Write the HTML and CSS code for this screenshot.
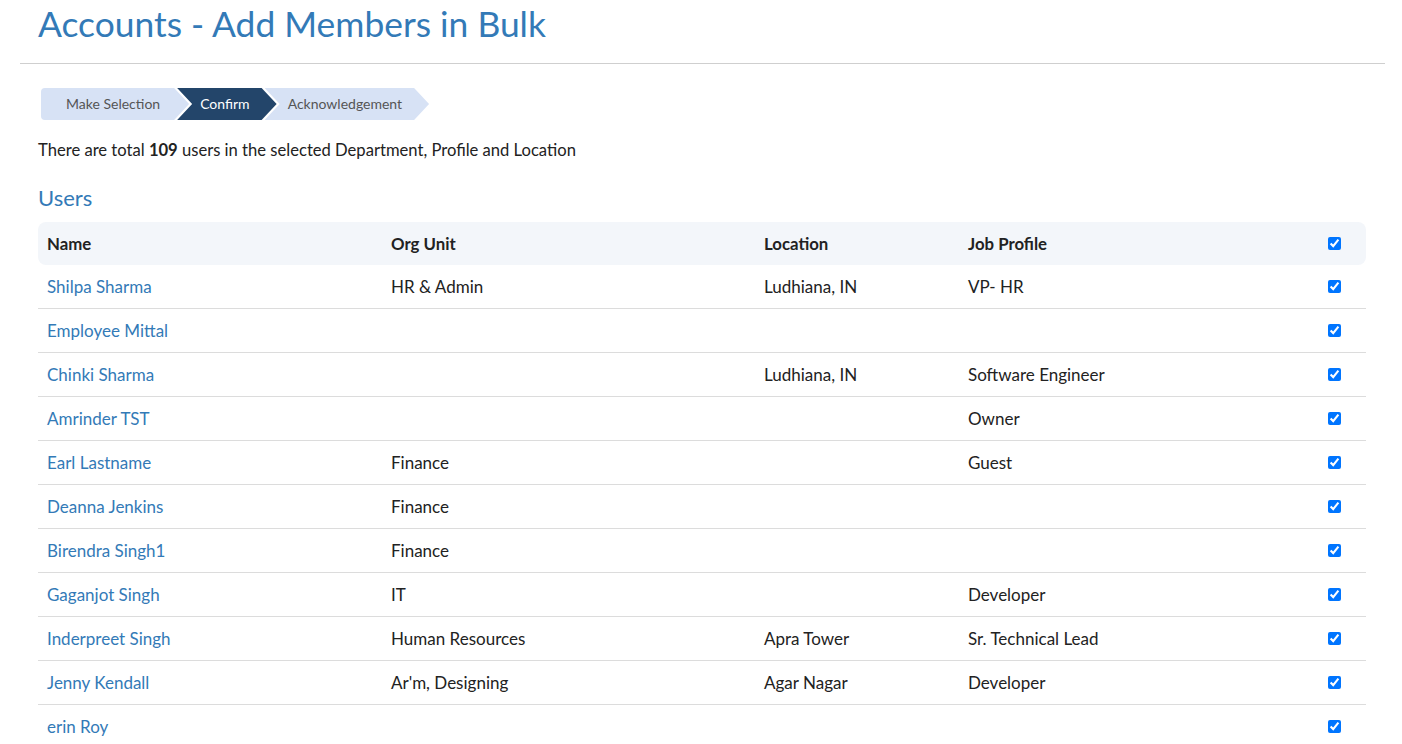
FILE: index.html
```html
<!DOCTYPE html>
<html lang="en">
<head>
<meta charset="utf-8">
<title>Accounts - Add Members in Bulk</title>
<link rel="stylesheet" href="styles.css">
</head>
<body>
<header class="page-header">
  <h1 class="page-title">Accounts - Add Members in Bulk</h1>
</header>
<main class="content">
  <nav class="steps">
    <div class="step step-first">Make Selection</div>
    <div class="step step-active">Confirm</div>
    <div class="step">Acknowledgement</div>
  </nav>
  <p class="summary">There are total <strong>109</strong> users in the selected Department, Profile and Location</p>
  <h2 class="section-title">Users</h2>
  <table class="users">
    <colgroup>
      <col class="c-name"><col class="c-org"><col class="c-loc"><col class="c-job"><col>
    </colgroup>
    <thead>
      <tr><th>Name</th><th>Org Unit</th><th>Location</th><th>Job Profile</th><th class="chk"><input type="checkbox" checked></th></tr>
    </thead>
    <tbody>
      <tr><td><a href="#">Shilpa Sharma</a></td><td>HR &amp; Admin</td><td>Ludhiana, IN</td><td>VP- HR</td><td class="chk"><input type="checkbox" checked></td></tr>
      <tr><td><a href="#">Employee Mittal</a></td><td></td><td></td><td></td><td class="chk"><input type="checkbox" checked></td></tr>
      <tr><td><a href="#">Chinki Sharma</a></td><td></td><td>Ludhiana, IN</td><td>Software Engineer</td><td class="chk"><input type="checkbox" checked></td></tr>
      <tr><td><a href="#">Amrinder TST</a></td><td></td><td></td><td>Owner</td><td class="chk"><input type="checkbox" checked></td></tr>
      <tr><td><a href="#">Earl Lastname</a></td><td>Finance</td><td></td><td>Guest</td><td class="chk"><input type="checkbox" checked></td></tr>
      <tr><td><a href="#">Deanna Jenkins</a></td><td>Finance</td><td></td><td></td><td class="chk"><input type="checkbox" checked></td></tr>
      <tr><td><a href="#">Birendra Singh1</a></td><td>Finance</td><td></td><td></td><td class="chk"><input type="checkbox" checked></td></tr>
      <tr><td><a href="#">Gaganjot Singh</a></td><td>IT</td><td></td><td>Developer</td><td class="chk"><input type="checkbox" checked></td></tr>
      <tr><td><a href="#">Inderpreet Singh</a></td><td>Human Resources</td><td>Apra Tower</td><td>Sr. Technical Lead</td><td class="chk"><input type="checkbox" checked></td></tr>
      <tr><td><a href="#">Jenny Kendall</a></td><td>Ar'm, Designing</td><td>Agar Nagar</td><td>Developer</td><td class="chk"><input type="checkbox" checked></td></tr>
      <tr><td><a href="#">erin Roy</a></td><td></td><td></td><td></td><td class="chk"><input type="checkbox" checked></td></tr>
    </tbody>
  </table>
</main>
</body>
</html>
```
FILE: styles.css
```css
html, body {
  margin: 0;
  padding: 0;
  background: #fff;
}
body {
  font-family: Lato, "Open Sans", Arial, sans-serif;
  font-size: 17px;
  color: #222;
}
.page-header {
  margin: 0 17px 0 20px;
  padding: 2px 0 17px 18px;
  border-bottom: 1px solid #cfcfcf;
}
.page-title {
  margin: 0;
  font-size: 35.4px;
  line-height: 44px;
  font-weight: 400;
  color: #337ab7;
}
.content {
  padding: 24px 36px 0 38px;
}
.steps {
  display: flex;
  height: 32px;
  margin-left: 3px;
}
.step {
  display: flex;
  align-items: center;
  height: 32px;
  padding: 0 27px 1px 23px;
  box-sizing: border-box;
  margin-left: -12px;
  font-size: 14px;
  color: #555;
  background: #d7e2f5;
  clip-path: polygon(0 0, calc(100% - 15px) 0, 100% 50%, calc(100% - 15px) 100%, 0 100%, 15px 50%);
}
.step-first {
  margin-left: 0;
  padding-left: 25px;
  padding-right: 29px;
  border-radius: 4px 0 0 4px;
  clip-path: polygon(0 0, calc(100% - 15px) 0, 100% 50%, calc(100% - 15px) 100%, 0 100%);
}
.step-active {
  background: #23456a;
  color: #fff;
}
.summary {
  margin: 19px 0 0;
  font-size: 16.6px;
  line-height: 22px;
}
.summary strong {
  font-weight: 700;
}
.section-title {
  margin: 25px 0 12px;
  font-size: 22px;
  line-height: 24px;
  font-weight: 400;
  color: #337ab7;
}
.users {
  width: 100%;
  table-layout: fixed;
  border-collapse: separate;
  border-spacing: 0;
}
.c-name { width: 344px; }
.c-org { width: 373px; }
.c-loc { width: 204px; }
.c-job { width: 300px; }
.users th,
.users td {
  height: 43px;
  padding: 0 9px;
  text-align: left;
  vertical-align: middle;
  line-height: 20px;
  box-sizing: border-box;
}
.users th {
  font-weight: 700;
  font-size: 16.8px;
  background: #f3f6fa;
}
.users th:first-child { border-radius: 8px 0 0 8px; }
.users th:last-child { border-radius: 0 8px 8px 0; }
.users td {
  height: 44px;
  border-bottom: 1px solid #dcdcdc;
}
.users a {
  color: #337ab7;
  text-decoration: none;
}
.users .chk {
  padding-right: 25px;
}
.users input[type="checkbox"] {
  display: block;
  margin: 0 0 0 auto;
  width: 13px;
  height: 13px;
}
```
